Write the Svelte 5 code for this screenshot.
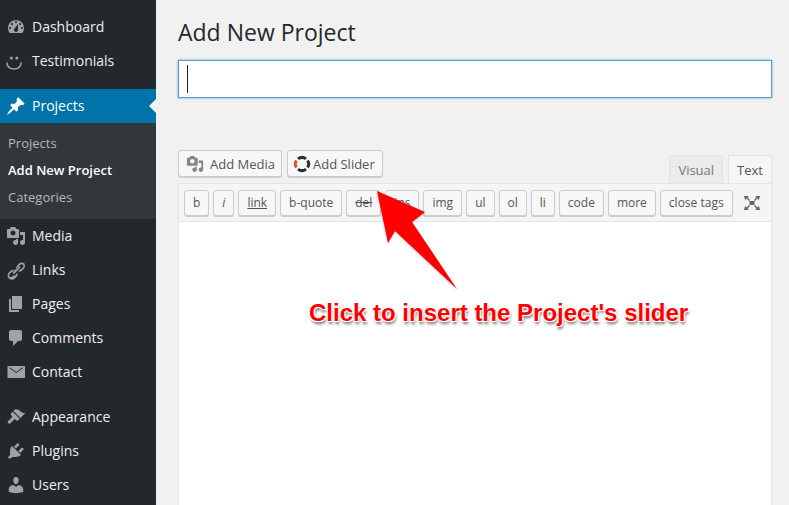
<script>
  const icons = {
    dashboard: 'M3.76 16h12.48c1.1-1.37 1.76-3.11 1.76-5 0-4.42-3.58-8-8-8s-8 3.58-8 8c0 1.89.66 3.63 1.76 5zM10 4c.55 0 1 .45 1 1s-.45 1-1 1-1-.45-1-1 .45-1 1-1zM6 6c.55 0 1 .45 1 1s-.45 1-1 1-1-.45-1-1 .45-1 1-1zm8 0c.55 0 1 .45 1 1s-.45 1-1 1-1-.45-1-1 .45-1 1-1zm-5.37 5.55L12 7v6c0 1.1-.9 2-2 2s-2-.9-2-2c0-.57.24-1.08.63-1.45zM4 10c.55 0 1 .45 1 1s-.45 1-1 1-1-.45-1-1 .45-1 1-1zm12 0c.55 0 1 .45 1 1s-.45 1-1 1-1-.45-1-1 .45-1 1-1z',
    pin: 'M10.44 3.02l1.82-1.82 6.36 6.35-1.83 1.82c-1.05-.68-2.48-.57-3.41.36l-.75.75c-.92.93-1.04 2.35-.35 3.41l-1.83 1.82-2.41-2.41-2.8 2.79c-.42.42-3.38 2.71-3.8 2.29s1.86-3.39 2.28-3.81l2.79-2.79L4.1 9.36l1.83-1.82c1.05.69 2.48.57 3.4-.36l.75-.75c.93-.92 1.05-2.35.36-3.41z',
    media: 'M13 11V4c0-.55-.45-1-1-1h-1.67L9 1H5L3.67 3H2c-.55 0-1 .45-1 1v7c0 .55.45 1 1 1h10c.55 0 1-.45 1-1zM7 4.5c1.38 0 2.5 1.12 2.5 2.5S8.38 9.5 7 9.5 4.5 8.38 4.5 7 5.62 4.5 7 4.5zM14 6h5v10.5c0 1.38-1.12 2.5-2.5 2.5S14 17.88 14 16.5s1.12-2.5 2.5-2.5c.17 0 .34.02.5.05V9h-3V6zm-4 8.05V13h2v3.5c0 1.38-1.12 2.5-2.5 2.5S7 17.88 7 16.5 8.12 14 9.5 14c.17 0 .34.02.5.05z',
    links: 'M17.74 2.76c1.68 1.69 1.68 4.41 0 6.1l-1.53 1.52c-1.12 1.12-2.7 1.49-4.13 1.13l2.1-2.1c.44-.02.85-.2 1.17-.52l1.53-1.53c.73-.73.73-1.9 0-2.63s-1.9-.73-2.63 0l-1.53 1.53c-.32.32-.5.73-.53 1.17l-2.1 2.1c-.36-1.43.01-3.01 1.13-4.13l1.53-1.53c1.68-1.68 4.41-1.68 6.09.01zM8.59 13.43l5.34-5.34c.42-.42.42-1.1 0-1.52-.44-.43-1.13-.39-1.53 0l-5.33 5.34c-.42.42-.42 1.1 0 1.52.44.43 1.13.39 1.52 0zM7.83 15.02l-1.53 1.53c-.72.73-1.9.73-2.63 0s-.73-1.9 0-2.63l1.53-1.53c.32-.32.73-.5 1.17-.53l2.1-2.1c-1.43-.36-3.01.01-4.13 1.13l-1.53 1.53c-1.68 1.69-1.68 4.41 0 6.1 1.69 1.68 4.41 1.68 6.1 0l1.53-1.53c1.12-1.12 1.49-2.7 1.13-4.13l-2.1 2.1c-.03.44-.21.85-.54 1.16z',
    pages: 'M6 15V2h10v13H6zm-1 1h8v2H3V5h2v11z',
    comments: 'M5 2h9c1.1 0 2 .9 2 2v7c0 1.1-.9 2-2 2h-2l-5 5v-5H5c-1.1 0-2-.9-2-2V4c0-1.1.9-2 2-2z',
    email: 'M2 4h16.5c.3 0 .5.2.5.5v11c0 .3-.2.5-.5.5H2c-.3 0-.5-.2-.5-.5v-11c0-.3.2-.5.5-.5zm1.6 2.3L10.2 11l6.7-4.7c.4-.3-.1-1-.5-.7l-6.2 4.3L4 5.6c-.4-.3-.8.4-.4.7z',
    appearance: 'M14.48 11.06L7.41 3.99l1.5-1.5c.5-.56 2.3-.47 3.51.32 1.21.8 1.43 1.28 2.91 2.1 1.18.64 2.45 1.26 4.23.91zm-.71.71L6.7 4.7 4.93 6.47c-.39.39-.39 1.02 0 1.41l1.06 1.06c.39.39.39 1.03 0 1.42-.6.6-1.43 1.43-2.12 2.12-.7.71-1.76 1.06-2.12 2.12-.35 1.06 1.06 2.47 2.12 2.12 1.06-.36 1.41-1.42 2.12-2.12l2.12-2.12c.39-.39 1.03-.39 1.42 0l1.06 1.06c.39.39 1.02.39 1.41 0z',
    plugins: 'M13.11 4.36L9.87 7.6 8 5.73l3.24-3.24c.35-.34 1.05-.2 1.56.32.52.51.66 1.21.31 1.55zm-8 1.77l.91-1.12 9.01 9.01-1.19.84c-.71.71-2.63 1.16-3.82 1.16H6.14L4.9 17.26c-.59.59-1.54.59-2.12 0-.59-.58-.59-1.53 0-2.12l1.24-1.24v-3.88c0-1.13.4-3.19 1.09-3.89zm7.26 3.97l3.24-3.24c.34-.35 1.04-.21 1.55.31.52.51.66 1.21.31 1.55l-3.24 3.25z',
    users: 'M10 9.25c-2.27 0-2.73-3.44-2.73-3.44C7 4.02 7.82 2 9.97 2c2.16 0 2.98 2.02 2.71 3.81 0 0-.41 3.44-2.68 3.44zm0 2.57L12.72 10c2.39 0 4.52 2.33 4.52 4.53v2.49s-3.65 1.13-7.24 1.13c-3.65 0-7.24-1.13-7.24-1.13v-2.49c0-2.25 1.94-4.53 4.43-4.53z'
  };

  const topItems = [
    { label: 'Dashboard', icon: 'dashboard' },
    { label: 'Testimonials', icon: 'smile' }
  ];
  const midItems = [
    { label: 'Media', icon: 'media' },
    { label: 'Links', icon: 'links' },
    { label: 'Pages', icon: 'pages' },
    { label: 'Comments', icon: 'comments' },
    { label: 'Contact', icon: 'email' }
  ];
  const lowItems = [
    { label: 'Appearance', icon: 'appearance' },
    { label: 'Plugins', icon: 'plugins' },
    { label: 'Users', icon: 'users' }
  ];
  const tags = ['b', 'i', 'link', 'b-quote', 'del', 'ins', 'img', 'ul', 'ol', 'li', 'code', 'more', 'close tags'];
</script>

{#snippet menuIcon(name)}
  <svg class="menu-icon" viewBox="0 0 20 20">
    {#if name === 'smile'}
      <circle cx="5.300" cy="7" r="1.500" />
      <circle cx="10.800" cy="7" r="1.500" />
      <path class="smile" d="M.8 11.500c.5 4.500 3.500 6.500 7.200 6.500s6.700-2 7.200-6.500" />
    {:else}
      <path d={icons[name]} />
    {/if}
  </svg>
{/snippet}

{#snippet menuRow(item)}
  <li class="item">
    {@render menuIcon(item.icon)}
    <span>{item.label}</span>
  </li>
{/snippet}

<div class="page">
  <aside class="sidebar">
    <ul class="group first">
      {#each topItems as item}
        {@render menuRow(item)}
      {/each}
    </ul>

    <div class="current item">
      {@render menuIcon('pin')}
      <span>Projects</span>
    </div>
    <ul class="submenu">
      <li>Projects</li>
      <li class="active">Add New Project</li>
      <li>Categories</li>
    </ul>

    <ul class="group">
      {#each midItems as item}
        {@render menuRow(item)}
      {/each}
    </ul>
    <ul class="group low">
      {#each lowItems as item}
        {@render menuRow(item)}
      {/each}
    </ul>
  </aside>

  <main class="content">
    <h1>Add New Project</h1>
    <div class="title-input"><i class="caret"></i></div>

    <div class="media-row">
      <div class="media-buttons">
        <button>
          <svg class="btn-icon" viewBox="0 0 20 20"><path d={icons.media} /></svg>
          Add Media
        </button>
        <button class="slider-btn">
          <svg class="slider-icon" viewBox="0 0 18 18">
            <g fill="none" stroke-width="3">
              <path stroke="#e8501e" d="M3.400 12.500A6.500 6.500 0 0 1 3.400 5.500" />
              <path stroke="#23303c" d="M5 3.900A6.500 6.500 0 0 1 13 3.900" />
              <path stroke="#23303c" d="M14.600 5.500A6.500 6.500 0 0 1 14.600 12.500" />
              <path stroke="#23303c" d="M13 14.100A6.500 6.500 0 0 1 5 14.100" />
            </g>
          </svg>
          Add Slider
        </button>
      </div>
      <div class="tabs">
        <span class="tab">Visual</span>
        <span class="tab on">Text</span>
      </div>
    </div>

    <div class="editor">
      <div class="toolbar">
        {#each tags as tag}
          <button class="tag {tag === 'del' ? 'del' : ''} {tag === 'link' ? 'link' : ''} {tag === 'i' ? 'ital' : ''}">{tag}</button>
        {/each}
        <svg class="expand" viewBox="0 0 18 18">
          <rect x="6.500" y="7" width="5" height="4" />
          <path d="M1 2h5L4.500 3.500 7 6 6 7 3.500 4.500 2 6zM17 2h-5l1.500 1.500L11 6l1 1 2.500-2.500L16 6zM1 16h5l-1.500-1.500L7 12l-1-1-2.500 2.500L2 12zM17 16h-5l1.500-1.500L11 12l1-1 2.500 2.500L16 12z" />
        </svg>
      </div>
      <div class="textarea"></div>
    </div>
  </main>

  <svg class="arrow" viewBox="0 0 100 110" width="100" height="110">
    <polygon points="7,1 18,53 25,41 87,99 42,32 55,22" fill="#fe0000" />
  </svg>
  <div class="callout">Click to insert the Project's slider</div>
</div>

<style>
  :global(body) {
    margin: 0;
    background: #f1f1f1;
  }

  .page {
    position: relative;
    display: flex;
    width: 789px;
    height: 505px;
    overflow: hidden;
    font-family: 'Open Sans', sans-serif;
    font-size: 14px;
    color: #444;
  }

  .sidebar {
    flex: 0 0 156px;
    background: #23282d;
    color: #eee;
  }

  ul {
    list-style: none;
    margin: 0;
    padding: 0;
  }

  .group.first {
    padding: 10px 0 11px;
  }

  .group.low {
    margin-top: 11px;
  }

  .item {
    display: flex;
    align-items: center;
    height: 34px;
    padding-left: 6px;
    gap: 6px;
  }

  .item span {
    padding-bottom: 2px;
  }

  .menu-icon {
    width: 20px;
    height: 20px;
    fill: #9ea3a8;
    flex: none;
  }

  .smile {
    fill: none;
    stroke: #9ea3a8;
    stroke-width: 1.600;
  }

  .current {
    position: relative;
    background: #0073aa;
    color: #fff;
  }

  .current .menu-icon {
    fill: #fff;
  }

  .current::after {
    content: '';
    position: absolute;
    right: 0;
    top: 10px;
    border: 7px solid transparent;
    border-right-color: #f1f1f1;
    border-left-width: 0;
  }

  .submenu {
    background: #32373c;
    height: 96px;
    padding: 7px 0;
    box-sizing: border-box;
    font-size: 13px;
    color: #b4b9be;
  }

  .submenu li {
    height: 27px;
    line-height: 27px;
    padding-left: 8px;
  }

  .submenu .active {
    color: #fff;
    font-weight: 600;
  }

  .content {
    flex: 1;
    min-width: 0;
    padding: 0 17px 0 22px;
  }

  h1 {
    margin: 15px 0 0;
    font-size: 23px;
    font-weight: 400;
    line-height: 34px;
    color: #23282d;
  }

  .title-input {
    display: flex;
    align-items: center;
    height: 38px;
    margin-top: 11px;
    box-sizing: border-box;
    padding-left: 8px;
    background: #fff;
    border: 1px solid #5b9dd9;
    box-shadow: 0 0 2px rgba(30, 140, 190, 0.8);
  }

  .caret {
    width: 1px;
    height: 28px;
    background: #222;
  }

  .media-row {
    display: flex;
    justify-content: space-between;
    align-items: flex-end;
    margin-top: 52px;
  }

  .media-buttons {
    display: flex;
    gap: 5px;
    padding-bottom: 6px;
  }

  button {
    display: flex;
    align-items: center;
    box-sizing: border-box;
    margin: 0;
    font-family: inherit;
    font-size: 13px;
    color: #555;
    white-space: nowrap;
    background: #f7f7f7;
    border: 1px solid #ccc;
    border-radius: 3px;
    box-shadow: 0 1px 0 #ccc;
  }

  .media-buttons button {
    height: 27px;
    padding: 0 6px 0 7px;
    gap: 6px;
  }

  .media-buttons .slider-btn {
    padding: 0 7px 0 5px;
    gap: 2px;
  }

  .btn-icon {
    width: 18px;
    height: 18px;
    fill: #82878c;
  }

  .slider-icon {
    width: 18px;
    height: 18px;
  }

  .tabs {
    display: flex;
    gap: 5px;
  }

  .tab {
    display: flex;
    align-items: center;
    height: 28px;
    box-sizing: border-box;
    padding: 0 8px;
    font-size: 13px;
    color: #777;
    background: #ebebeb;
    border: 1px solid #e5e5e5;
    border-bottom: 0;
  }

  .tab.on {
    color: #555;
    background: #f5f5f5;
  }

  .editor {
    border: 1px solid #e5e5e5;
    background: #fff;
    height: 400px;
  }

  .toolbar {
    display: flex;
    align-items: center;
    gap: 4px;
    height: 38px;
    box-sizing: border-box;
    padding: 0 5px;
    background: #f5f5f5;
    border-bottom: 1px solid #e5e5e5;
  }

  .tag {
    height: 26px;
    padding: 0 8px;
    font-size: 12px;
    color: #555;
  }

  .tag.ital {
    font-style: italic;
  }

  .tag.link {
    text-decoration: underline;
  }

  .tag.del {
    text-decoration: line-through;
  }

  .expand {
    width: 18px;
    height: 18px;
    margin-left: 6px;
    fill: #666;
  }

  .arrow {
    position: absolute;
    left: 370px;
    top: 190px;
    filter: drop-shadow(0 1px 1px rgba(0, 0, 0, 0.25));
  }

  .callout {
    position: absolute;
    left: 309px;
    top: 298px;
    font-family: 'Liberation Sans', sans-serif;
    font-size: 24px;
    font-weight: 700;
    line-height: 30px;
    white-space: nowrap;
    color: #fe0000;
    text-shadow: 1px 1px 0 #fff, -1px -1px 0 #fff, 1px -1px 0 #fff, -1px 1px 0 #fff, 1px 3px 3px rgba(0, 0, 0, 0.6);
  }
</style>
